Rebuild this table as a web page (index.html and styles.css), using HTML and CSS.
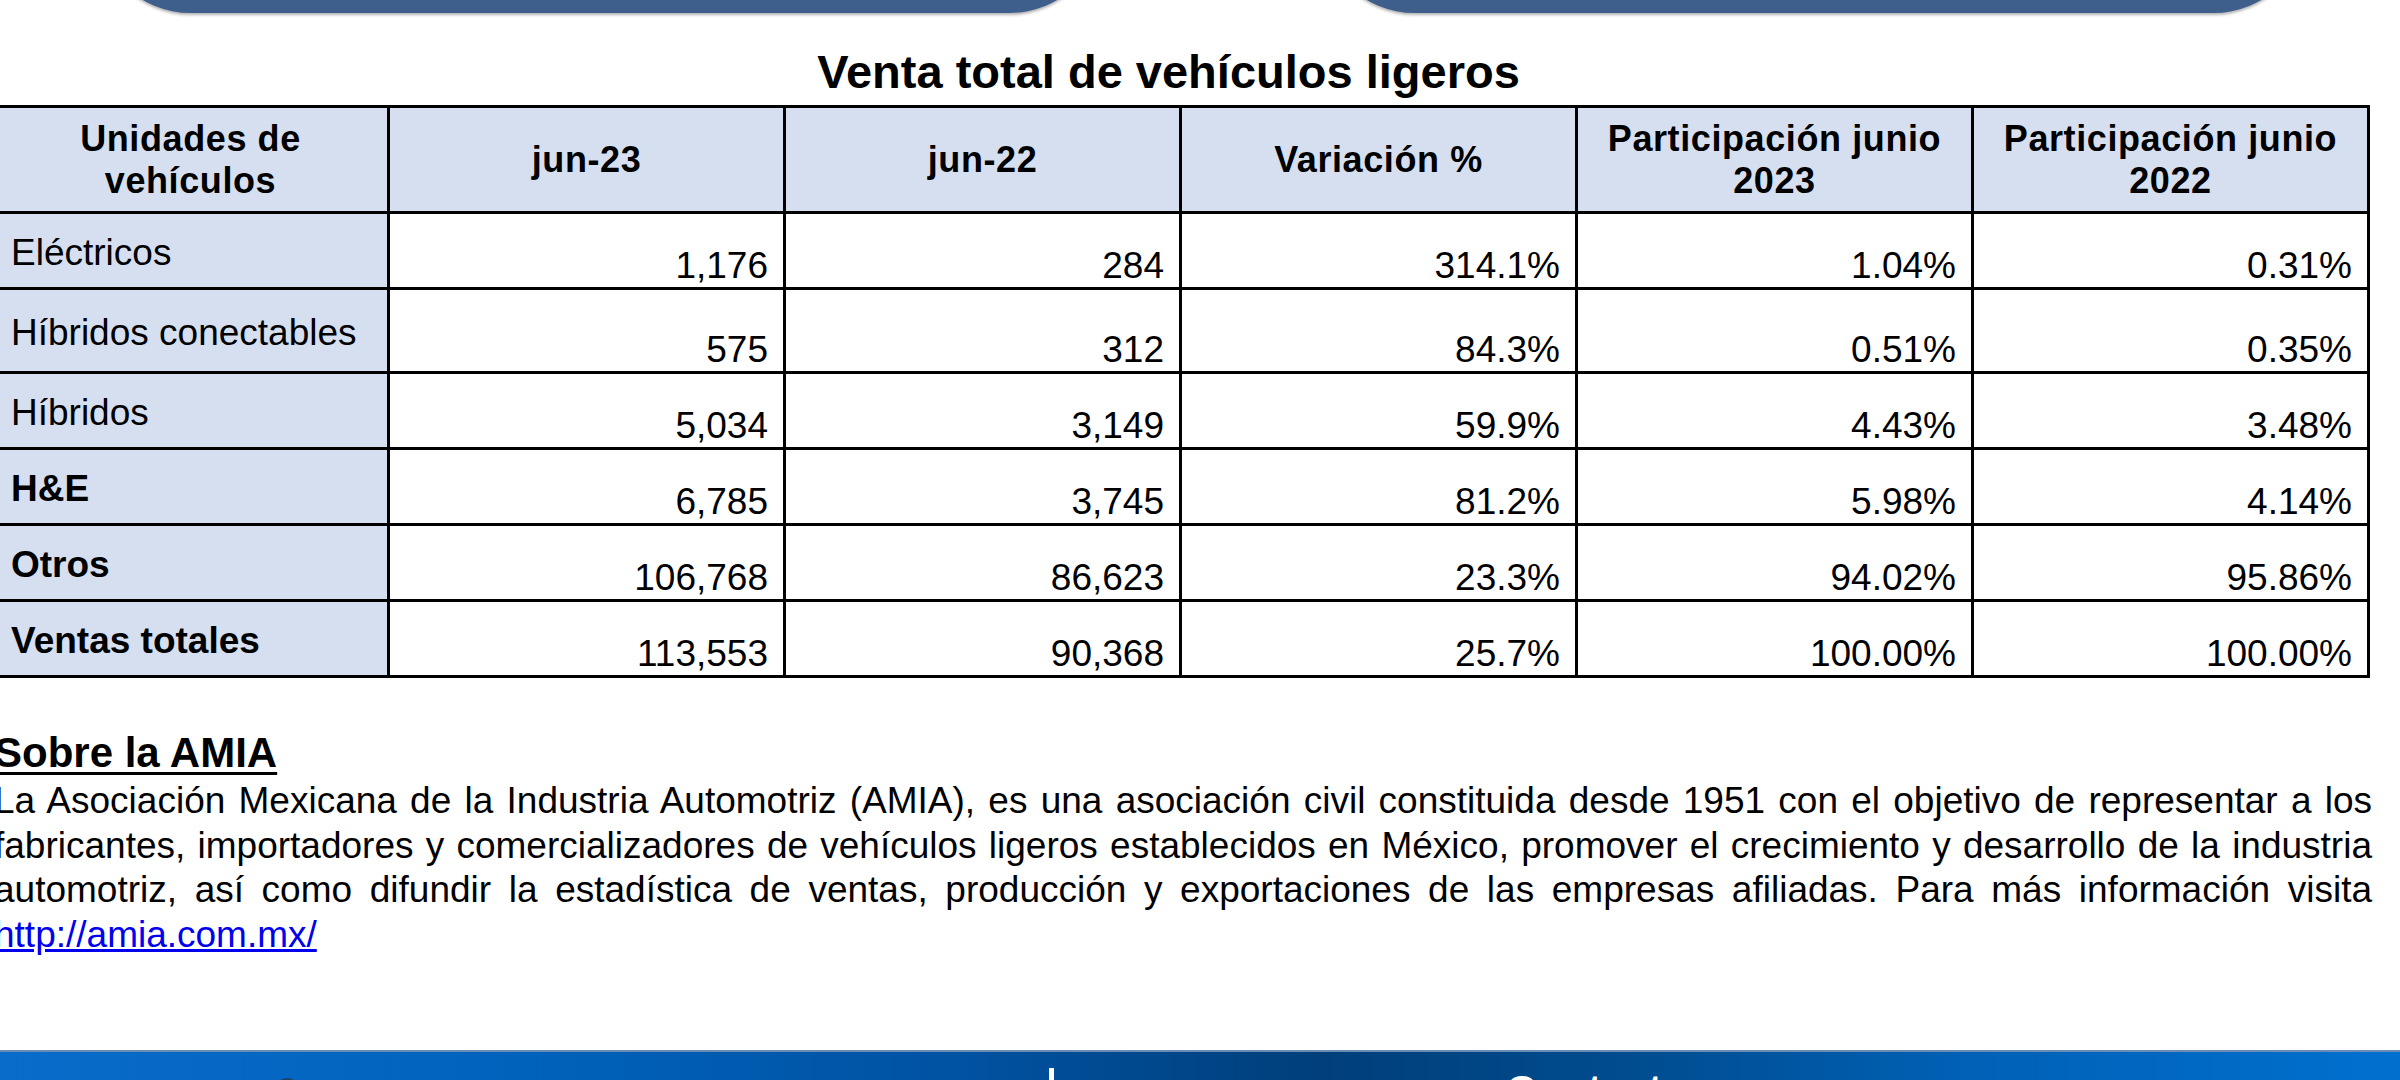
FILE: index.html
```html
<!DOCTYPE html>
<html lang="es">
<head>
<meta charset="utf-8">
<title>Venta total de vehículos ligeros</title>
<link rel="stylesheet" href="styles.css">
</head>
<body>
<div class="page">
  <div class="top-buttons">
    <div class="top-btn top-btn-left"></div>
    <div class="top-btn top-btn-right"></div>
  </div>

  <section class="report">
    <h2 class="report-title">Venta total de vehículos ligeros</h2>
    <table class="sales">
      <thead>
        <tr>
          <th>Unidades de<br>vehículos</th>
          <th>jun-23</th>
          <th>jun-22</th>
          <th>Variación %</th>
          <th>Participación junio<br>2023</th>
          <th>Participación junio<br>2022</th>
        </tr>
      </thead>
      <tbody>
        <tr>
          <td class="label">Eléctricos</td>
          <td>1,176</td><td>284</td><td>314.1%</td><td>1.04%</td><td>0.31%</td>
        </tr>
        <tr class="tall">
          <td class="label">Híbridos conectables</td>
          <td>575</td><td>312</td><td>84.3%</td><td>0.51%</td><td>0.35%</td>
        </tr>
        <tr>
          <td class="label">Híbridos</td>
          <td>5,034</td><td>3,149</td><td>59.9%</td><td>4.43%</td><td>3.48%</td>
        </tr>
        <tr>
          <td class="label strong">H&amp;E</td>
          <td>6,785</td><td>3,745</td><td>81.2%</td><td>5.98%</td><td>4.14%</td>
        </tr>
        <tr>
          <td class="label strong">Otros</td>
          <td>106,768</td><td>86,623</td><td>23.3%</td><td>94.02%</td><td>95.86%</td>
        </tr>
        <tr>
          <td class="label strong">Ventas totales</td>
          <td>113,553</td><td>90,368</td><td>25.7%</td><td>100.00%</td><td>100.00%</td>
        </tr>
      </tbody>
    </table>
  </section>

  <section class="about">
    <h3 class="about-title">Sobre la AMIA</h3>
    <p class="about-text">
      <span class="line">La Asociación Mexicana de la Industria Automotriz (AMIA), es una asociación civil constituida desde 1951 con el objetivo de representar a los</span>
      <span class="line">fabricantes, importadores y comercializadores de vehículos ligeros establecidos en México, promover el crecimiento y desarrollo de la industria</span>
      <span class="line">automotriz, así como difundir la estadística de ventas, producción y exportaciones de las empresas afiliadas. Para más información visita</span>
      <span class="line line-last"><a class="about-link" href="#">http://amia.com.mx/</a></span>
    </p>
  </section>

  <footer class="footer">
    <span class="f-icon"></span>
    <span class="f-bar"></span>
    <span class="f-contact">Contacto</span>
  </footer>
</div>
</body>
</html>
```

FILE: styles.css
```css
* { box-sizing: border-box; }

html, body {
  margin: 0;
  padding: 0;
  background: #ffffff;
}

body {
  width: 2400px;
  height: 1080px;
  overflow: hidden;
  font-family: "Liberation Sans", Arial, sans-serif;
  color: #000;
}

.page {
  height: 1080px;
  display: flex;
  flex-direction: column;
}

/* top rounded buttons, cut by the viewport */
.top-buttons {
  display: flex;
  height: 13px;
  padding-left: 95px;
  gap: 214px;
  flex-shrink: 0;
}

.top-btn {
  height: 110px;
  margin-top: -97px;
  background: #3e5f8b;
  border-radius: 0 0 96px 96px;
  box-shadow: 0 2px 3px rgba(0, 0, 0, 0.3);
}

.top-btn-left { width: 1010px; }
.top-btn-right { width: 990px; }

/* report */
.report {
  width: 2379px;
  margin-left: -9px;
  flex-shrink: 0;
}

.report-title {
  margin: 31px 0 5px;
  padding-right: 24px;
  font-size: 47px;
  line-height: 56px;
  font-weight: 700;
  text-align: center;
}

.sales {
  width: 2379px;
  border-collapse: collapse;
  table-layout: fixed;
}

.sales th,
.sales td {
  border: 3px solid #000;
}

.sales th {
  height: 106px;
  padding: 0 6px;
  background: #d6dff0;
  font-size: 36px;
  letter-spacing: 0.6px;
  line-height: 42px;
  font-weight: 700;
  text-align: center;
  vertical-align: middle;
}

.sales td {
  height: 76px;
  padding: 0 15px 1px 10px;
  font-size: 37px;
  line-height: 40px;
  text-align: right;
  vertical-align: bottom;
  white-space: nowrap;
}

.sales tr.tall td { height: 84px; }

.sales td.label {
  padding: 5px 10px 0 17px;
  background: #d6dff0;
  text-align: left;
  vertical-align: middle;
}

.sales td.strong { font-weight: 700; }

/* about */
.about {
  width: 2378px;
  margin-left: -6px;
  margin-top: 52px;
  flex-shrink: 0;
}

.about-title {
  margin: 0;
  font-size: 42px;
  line-height: 46px;
  font-weight: 700;
  text-decoration: underline;
  text-decoration-thickness: 3px;
  text-underline-offset: 5px;
}

.about-text {
  margin: 3px 0 0;
  font-size: 37px;
  line-height: 44.5px;
}

.line {
  display: block;
  text-align: justify;
  text-align-last: justify;
}

.line-last { text-align-last: left; }

.about-link {
  color: #0000ee;
  text-decoration: underline;
}

/* footer */
.footer {
  margin-top: auto;
  height: 30px;
  flex-shrink: 0;
  display: flex;
  align-items: flex-start;
  overflow: hidden;
  border-top: 2px solid #6b8db4;
  background: linear-gradient(90deg, #0a6cca 0%, #0062bb 22%, #0052a2 40%, #003f7a 55%, #004c8f 68%, #0061b6 82%, #0070cf 100%);
}

.f-icon {
  margin-left: 275px;
  margin-top: 26px;
  width: 24px;
  height: 24px;
  border-radius: 50%;
  background: #1d416d;
}

.f-bar {
  margin-left: 750px;
  margin-top: 16px;
  width: 5px;
  height: 30px;
  background: #ffffff;
}

.f-contact {
  margin-left: 452px;
  margin-top: 15px;
  color: #ffffff;
  font-size: 42px;
  line-height: 48px;
  font-weight: 700;
}
```
